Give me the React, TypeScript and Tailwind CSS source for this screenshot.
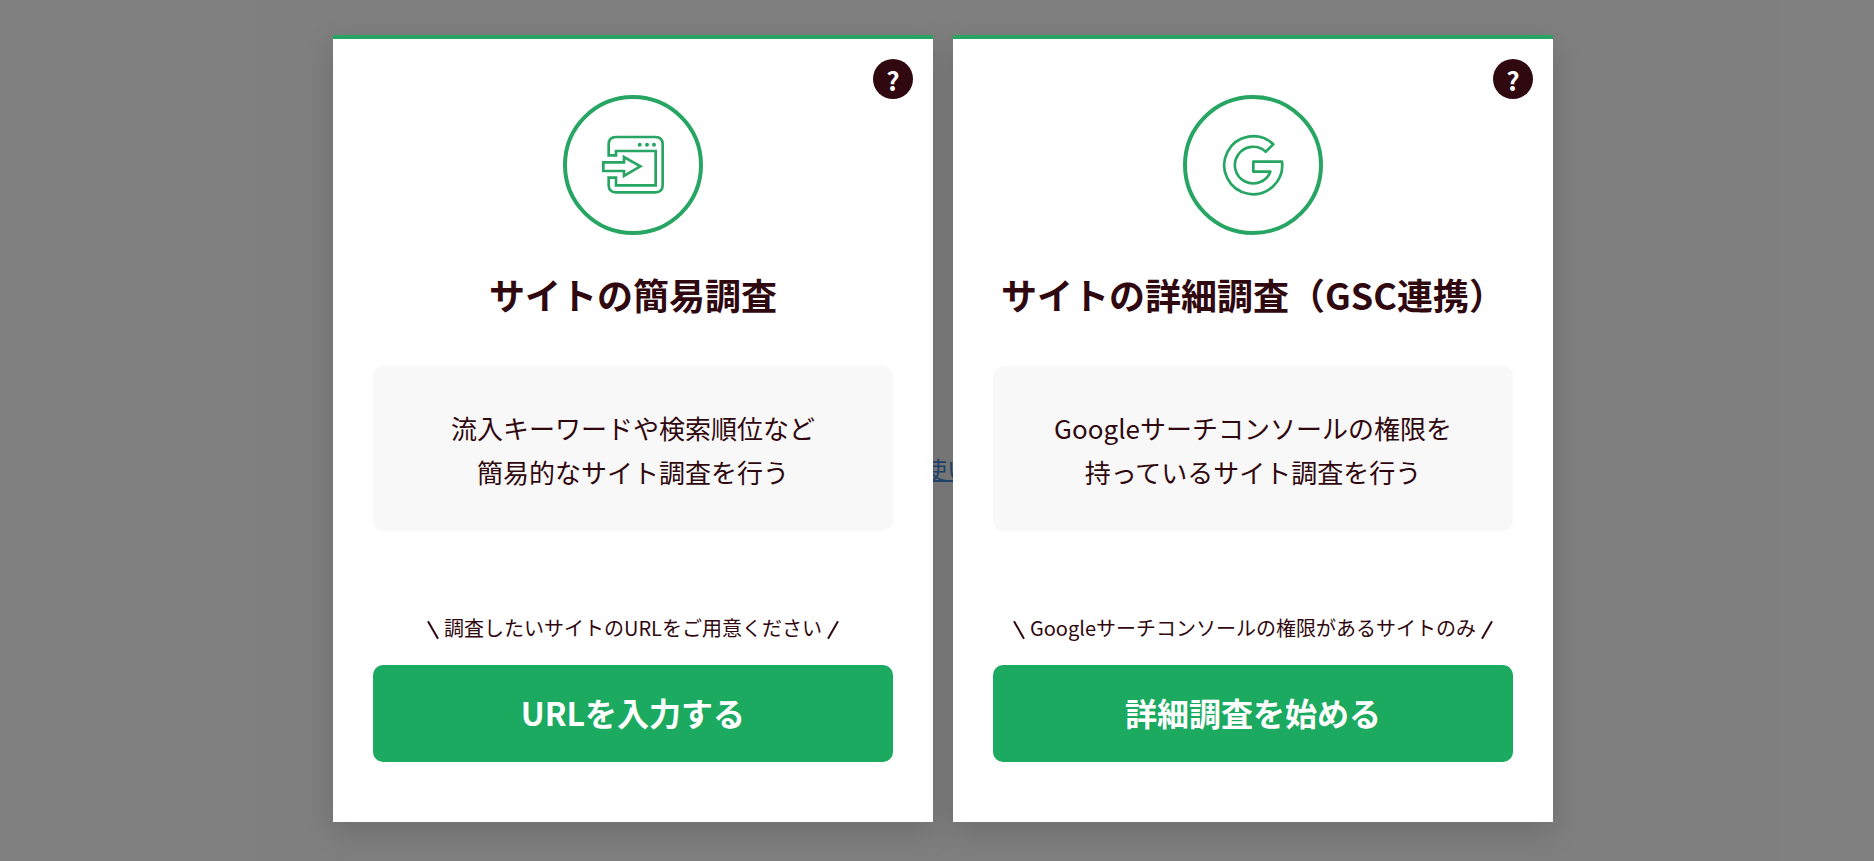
import type { ReactNode } from "react";

type Survey = {
  id: string;
  icon: ReactNode;
  title: string;
  lines: string[];
  note: string;
  action: string;
};

function EntryIcon() {
  return (
    <svg
      viewBox="153 144 192 192"
      className="size-16"
      fill="none"
      stroke="currentColor"
      strokeWidth="8"
      aria-hidden="true"
    >
      <path d="M176 211V178Q176 156 198 156H316Q338 156 338 178V300Q338 322 316 322H198Q176 322 176 300V278H198V301H317V198H198V211Z" />
      <path d="M160 232H222V216L271 244L222 273V258H160Z" />
      <g fill="currentColor" stroke="none">
        <circle cx="269" cy="179" r="6" />
        <circle cx="291" cy="179" r="6" />
        <circle cx="312" cy="179" r="6" />
      </g>
    </svg>
  );
}

function GoogleIcon() {
  return (
    <svg
      viewBox="153 144 192 192"
      className="size-16"
      fill="none"
      stroke="currentColor"
      strokeWidth="8"
      strokeLinejoin="round"
      aria-hidden="true"
    >
      <path d="M310 178A87 87 0 1 0 336 230H250V260H301A55 55 0 1 1 287 200Z" />
    </svg>
  );
}

const surveys: Survey[] = [
  {
    id: "simple",
    icon: <EntryIcon />,
    title: "サイトの簡易調査",
    lines: ["流入キーワードや検索順位など", "簡易的なサイト調査を行う"],
    note: "調査したいサイトのURLをご用意ください",
    action: "URLを入力する",
  },
  {
    id: "detail",
    icon: <GoogleIcon />,
    title: "サイトの詳細調査（GSC連携）",
    lines: ["Googleサーチコンソールの権限を", "持っているサイト調査を行う"],
    note: "Googleサーチコンソールの権限があるサイトのみ",
    action: "詳細調査を始める",
  },
];

function SurveyCard({ survey }: { survey: Survey }) {
  return (
    <section className="relative flex w-full max-w-[600px] flex-col items-center border-t-4 border-[#27a563] bg-white px-10 pt-14 pb-[60px] shadow-[0_10px_30px_rgba(0,0,0,0.15)]">
      <button
        type="button"
        aria-label="ヘルプ"
        className="absolute top-5 right-5 flex size-10 items-center justify-center rounded-full bg-[#30080f] text-[26px] font-bold text-white"
      >
        ?
      </button>

      <div className="flex size-[140px] items-center justify-center rounded-full border-4 border-[#27a563] text-[#27a563]">
        {survey.icon}
      </div>

      <h2 className="mt-[31px] text-4xl/[56px] font-bold whitespace-nowrap">{survey.title}</h2>

      <p className="mt-11 w-full rounded-[10px] bg-[#f8f8f8] pt-10 pb-[37px] text-center text-[26px]/[44px]">
        {survey.lines.map((line) => (
          <span key={line} className="block">
            {line}
          </span>
        ))}
      </p>

      <div className="mt-[82px] flex items-center justify-center gap-1.5 text-xl/[30px] whitespace-nowrap">
        <span className="mx-1 mt-1 h-5 w-[2px] -rotate-30 bg-current" />
        <p>{survey.note}</p>
        <span className="mx-1 mt-1 h-5 w-[2px] rotate-30 bg-current" />
      </div>

      <button
        type="button"
        className="mt-[22px] h-[97px] w-full rounded-[10px] bg-[#1baa5f] pb-1 text-[32px] font-bold text-white hover:opacity-90"
      >
        {survey.action}
      </button>
    </section>
  );
}

export default function App() {
  return (
    <div className="relative min-h-screen overflow-hidden bg-white font-['Noto_Sans_CJK_JP',sans-serif] text-[#30080f]">
      {/* page under the modal */}
      <div className="absolute inset-0 flex items-center justify-center pt-[76px] pr-1">
        <a href="#usage" className="text-2xl text-[#4a90e2] underline decoration-2">
          の使い
        </a>
      </div>

      {/* modal */}
      <div className="relative flex min-h-screen items-start justify-center gap-5 bg-black/50 pt-[35px] pb-9 pl-3">
        {surveys.map((survey) => (
          <SurveyCard key={survey.id} survey={survey} />
        ))}
      </div>
    </div>
  );
}
